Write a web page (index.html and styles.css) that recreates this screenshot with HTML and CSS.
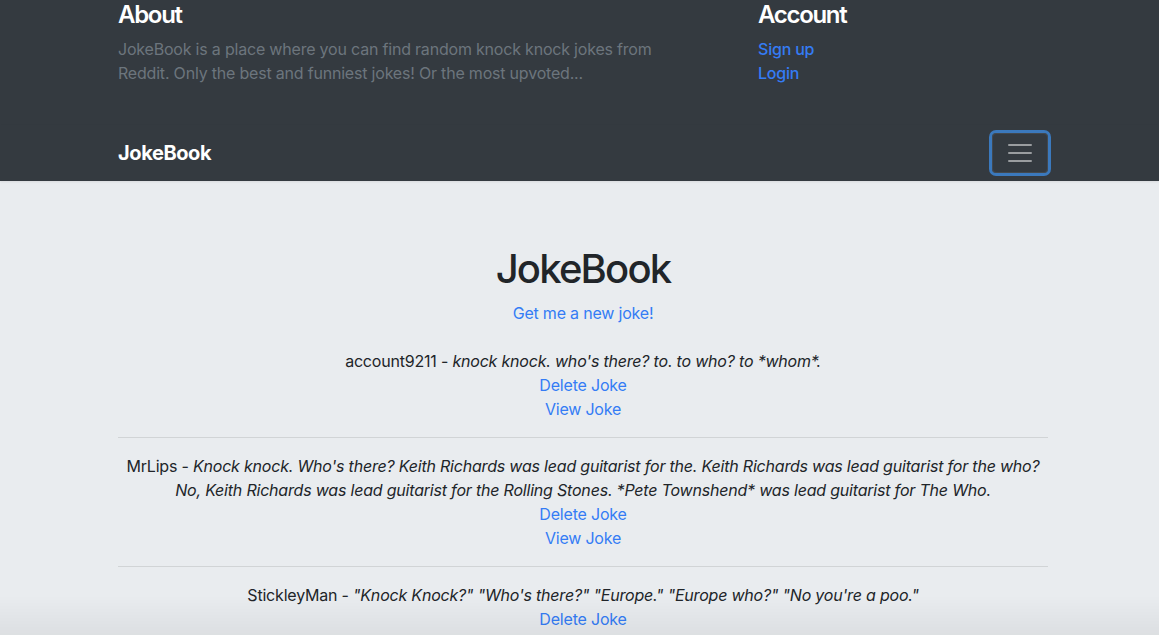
FILE: index.html
```html
<!DOCTYPE html>
<html lang="en">
<head>
<meta charset="utf-8">
<title>JokeBook</title>
<link rel="stylesheet" href="styles.css">
</head>
<body>
<header class="site-header">
  <div class="panel">
    <div class="container panel-row">
      <div class="about">
        <h4 class="panel-title">About</h4>
        <p class="muted">JokeBook is a place where you can find random knock knock jokes from Reddit. Only the best and funniest jokes! Or the most upvoted...</p>
      </div>
      <div class="account">
        <h4 class="panel-title">Account</h4>
        <ul class="link-list">
          <li><a href="#" class="link">Sign up</a></li>
          <li><a href="#" class="link">Login</a></li>
        </ul>
      </div>
    </div>
  </div>
  <nav class="navbar">
    <div class="container nav-inner">
      <a href="#" class="brand">JokeBook</a>
      <button class="toggler" type="button" aria-label="Toggle navigation">
        <svg class="toggler-icon" viewBox="0 0 30 30" width="30" height="30"><path d="M4 7h22M4 15h22M4 23h22" stroke="rgba(255,255,255,0.5)" stroke-width="2" stroke-linecap="round"/></svg>
      </button>
    </div>
  </nav>
</header>
<main class="main">
  <div class="container content">
    <h1 class="page-title">JokeBook</h1>
    <p class="new-joke"><a href="#" class="link">Get me a new joke!</a></p>

    <div class="joke">
      <p class="joke-text">account9211 - <em>knock knock. who's there? to. to who? to *whom*.</em></p>
      <a href="#" class="link joke-link">Delete Joke</a>
      <a href="#" class="link joke-link">View Joke</a>
    </div>
    <hr class="divider">
    <div class="joke">
      <p class="joke-text">MrLips - <em>Knock knock. Who's there? Keith Richards was lead guitarist for the. Keith Richards was lead guitarist for the who? No, Keith Richards was lead guitarist for the Rolling Stones. *Pete Townshend* was lead guitarist for The Who.</em></p>
      <a href="#" class="link joke-link">Delete Joke</a>
      <a href="#" class="link joke-link">View Joke</a>
    </div>
    <hr class="divider">
    <div class="joke">
      <p class="joke-text">StickleyMan - <em>"Knock Knock?" "Who's there?" "Europe." "Europe who?" "No you're a poo."</em></p>
      <a href="#" class="link joke-link">Delete Joke</a>
      <a href="#" class="link joke-link">View Joke</a>
    </div>
  </div>
</main>
</body>
</html>
```
FILE: styles.css
```css
* { box-sizing: border-box; }
html, body { margin: 0; padding: 0; }
body {
  font-family: Inter, Roboto, "Liberation Sans", sans-serif;
  font-size: 16px;
  line-height: 24px;
  letter-spacing: -0.2px;
  color: #212529;
  background: #e9ecef;
}
body::after {
  content: "";
  position: fixed;
  left: 0; right: 0; bottom: 0;
  height: 40px;
  background: linear-gradient(rgba(0,0,0,0), rgba(0,0,0,0.05));
  pointer-events: none;
}
.container {
  width: 930px;
  margin-left: calc(50% - 461.5px);
}
.link { color: #347cf5; text-decoration: none; }

.site-header { background: #343a40; }
.panel { padding: 1px 0 24px; }
.panel-row {
  display: grid;
  grid-template-columns: 550px 1fr;
  column-gap: 90px;
}
.panel-title {
  margin: 0 0 7px;
  font-size: 24px;
  line-height: 28.8px;
  font-weight: 600;
  color: #fff;
  letter-spacing: -1.3px;
}
.muted { margin: 0 0 16px; color: #6c757d; }
.link-list { margin: 0 0 16px; padding: 0; list-style: none; }
.link-list .link { font-weight: 500; }

.navbar { padding: 8px 0; box-shadow: 0 1px 2px rgba(0,0,0,0.075); }
.nav-inner {
  display: flex;
  align-items: center;
  justify-content: space-between;
}
.brand {
  color: #fff;
  font-size: 20px;
  font-weight: 700;
  line-height: 30px;
  text-decoration: none;
  letter-spacing: -0.4px;
}
.toggler {
  display: flex;
  align-items: center;
  justify-content: center;
  width: 56px;
  height: 40px;
  padding: 0;
  background: transparent;
  border: 1px solid rgba(255,255,255,0.08);
  border-radius: 4px;
  box-shadow: 0 0 0 3px #3b79bd;
}
.toggler-icon { display: block; }

.content { text-align: center; padding-top: 64px; }
.page-title {
  margin: 0 0 8px;
  font-size: 40px;
  line-height: 48px;
  font-weight: 500;
  letter-spacing: -1.8px;
}
.new-joke { margin: 0 0 24px; }
.joke-text { margin: 0; }
.joke-link { display: block; }
.divider {
  margin: 16px 0;
  border: 0;
  border-top: 1px solid rgba(0,0,0,0.1);
  height: 0;
}
```
